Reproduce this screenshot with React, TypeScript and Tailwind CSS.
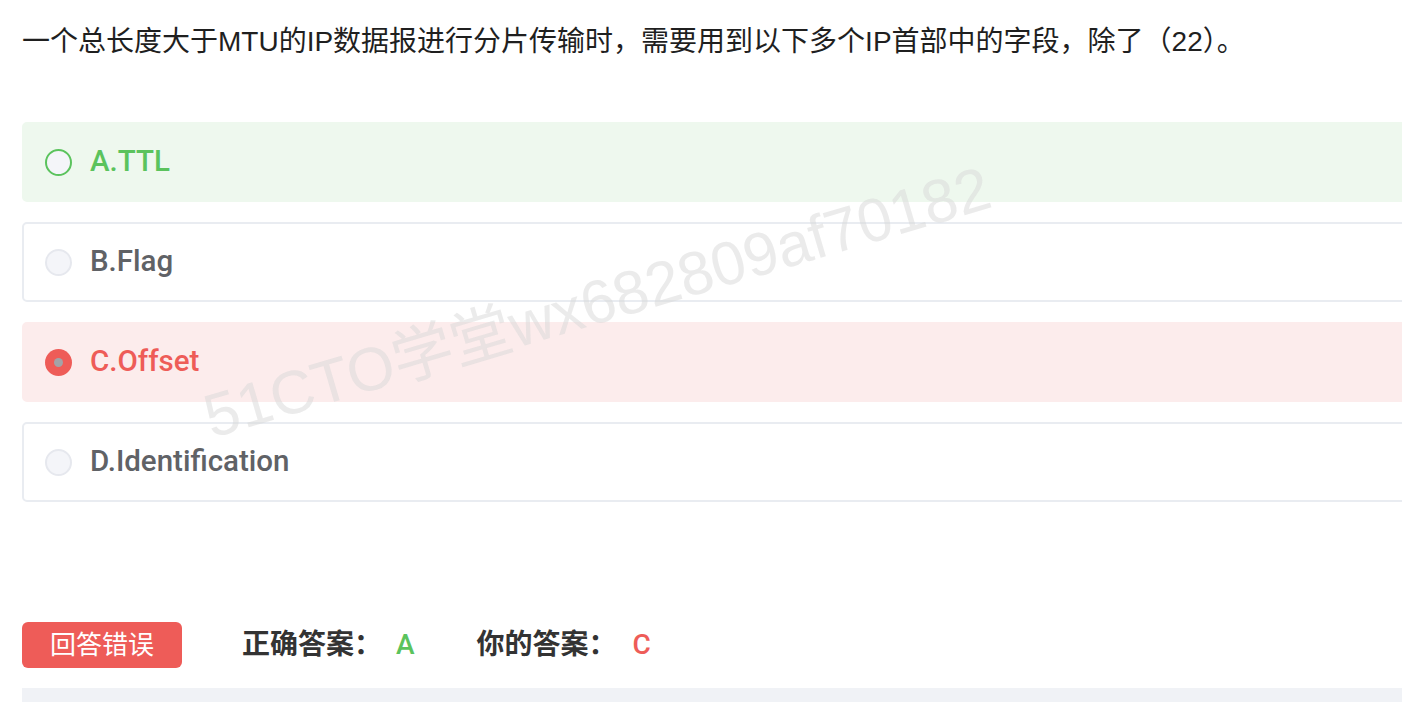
import React from "react";

type Option = {
  key: string;
  label: string;
  state: "correct" | "wrong" | "normal";
};

const options: Option[] = [
  { key: "A", label: "A.TTL", state: "correct" },
  { key: "B", label: "B.Flag", state: "normal" },
  { key: "C", label: "C.Offset", state: "wrong" },
  { key: "D", label: "D.Identification", state: "normal" },
];

const font = {
  fontFamily: '"Liberation Sans", "Noto Sans CJK SC", sans-serif',
};

const labelFont = {
  fontFamily: 'Roboto, "Liberation Sans", "Noto Sans CJK SC", sans-serif',
};

const Radio = ({ state }: { state: Option["state"] }) => {
  if (state === "wrong") {
    return (
      <span className="flex items-center justify-center w-[27px] h-[27px] rounded-full bg-[#ee5c58] shrink-0">
        <span className="w-[9px] h-[9px] rounded-full bg-[#a3a3a8]" />
      </span>
    );
  }
  if (state === "correct") {
    return (
      <span className="w-[27px] h-[27px] rounded-full border-2 border-[#5bc35d] bg-[#f4f5f9] shrink-0" />
    );
  }
  return (
    <span className="w-[27px] h-[27px] rounded-full border-2 border-[#e6e8ee] bg-[#f4f5f9] shrink-0" />
  );
};

const OptionCard = ({ opt }: { opt: Option }) => {
  const tone =
    opt.state === "correct"
      ? "bg-[#eef8ee] text-[#5bc35d] border-2 border-[#eef8ee]"
      : opt.state === "wrong"
        ? "bg-[#fcecec] text-[#ee5c58] border-2 border-[#fcecec]"
        : "bg-white text-[#606266] border-2 border-[#e9ecf1]";

  return (
    <div
      className={`flex items-center gap-[18px] h-[80px] pl-[21px] rounded-[5px] ${tone}`}
    >
      <Radio state={opt.state} />
      <span className="text-[29.5px] font-medium leading-none" style={labelFont}>
        {opt.label}
      </span>
    </div>
  );
};

export default function App() {
  return (
    <div className="relative h-[702px] w-[1402px] overflow-hidden bg-white" style={font}>
      <div className="w-[1460px] pl-[22px]">
        {/* Question */}
        <p className="pt-[26px] text-[28px] leading-[32px] text-[#1f1f1f] whitespace-nowrap">
          一个总长度大于MTU的IP数据报进行分片传输时，需要用到以下多个IP首部中的字段，除了（22）。
        </p>

        {/* Options */}
        <div className="mt-[64px] flex flex-col gap-[20px]">
          {options.map((opt) => (
            <OptionCard key={opt.key} opt={opt} />
          ))}
        </div>

        {/* Result */}
        <div className="mt-[120px] flex items-center h-[46px]">
          <span className="flex items-center justify-center w-[160px] h-[46px] rounded-[6px] bg-[#ee5c58] text-white text-[26px]">
            回答错误
          </span>
          <span className="ml-[60px] text-[28px] font-bold text-[#333333]">
            正确答案：<span className="text-[#5bc35d] ml-[14px] font-medium" style={labelFont}>A</span>
          </span>
          <span className="ml-[62px] text-[28px] font-bold text-[#333333]">
            你的答案：<span className="text-[#ee5c58] ml-[16px] font-medium" style={labelFont}>C</span>
          </span>
        </div>

        <div className="mt-[20px] h-[40px] bg-[#f0f2f6]" />
      </div>

      {/* Watermark */}
      <div className="pointer-events-none absolute left-[206px] top-[388px] origin-left -rotate-[16.5deg] text-[61px] leading-none text-[#d8d8d8]/50 whitespace-nowrap">
        51CTO学堂wx682809af70182
      </div>
    </div>
  );
}
